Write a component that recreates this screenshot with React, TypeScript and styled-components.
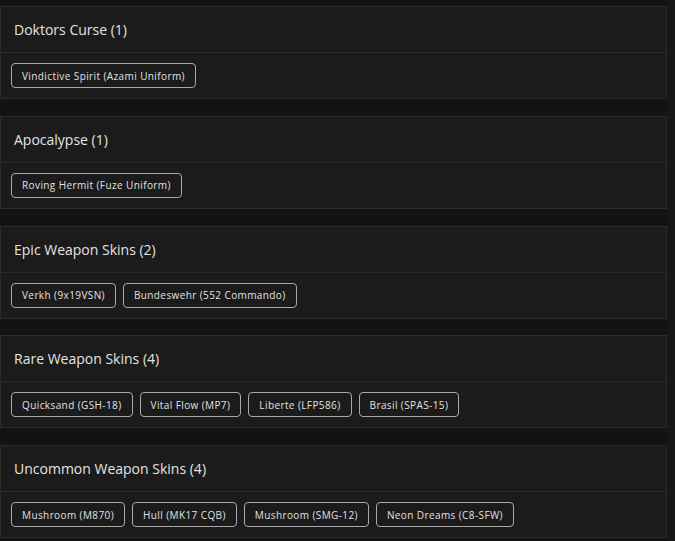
import React from "react";
import styled, { createGlobalStyle } from "styled-components";

const GlobalStyle = createGlobalStyle`
    html, body {
        margin: 0;
        padding: 0;
        background: #131313;
        font-family: "Open Sans", "Liberation Sans", sans-serif;
    }
`;

const PageSC = styled.div`
    display: flex;
    min-height: 541px;
`;

const ListSC = styled.div`
    flex: 1;
    display: flex;
    flex-direction: column;
    gap: 16.75px;
    padding-top: 6px;
    padding-bottom: 17px;
`;

const ScrollTrackSC = styled.div`
    width: 8px;
    background: #171717;
`;

const CardSC = styled.section`
    background: #1b1b1b;
    border: 1px solid #2b2b2b;
`;

const HeaderSC = styled.div`
    height: 45px;
    display: flex;
    align-items: center;
    padding: 0 13px;
    border-bottom: 1px solid #2b2b2b;
    color: #e4e4e4;
    font-size: 14px;
    letter-spacing: 0;
`;

const BodySC = styled.div`
    height: 45px;
    box-sizing: border-box;
    display: flex;
    align-items: center;
    gap: 7px;
    padding: 0 10px;
`;

const ChipSC = styled.span`
    height: 25px;
    box-sizing: border-box;
    display: inline-flex;
    align-items: center;
    padding: 0 10px;
    border: 1px solid #a9a9a9;
    border-radius: 4px;
    color: #e2e2e2;
    font-size: 10px;
    letter-spacing: 0.4px;
    white-space: nowrap;
`;

type Group = { title: string; items: string[] };

const groups: Group[] = [
    { title: "Doktors Curse", items: ["Vindictive Spirit (Azami Uniform)"] },
    { title: "Apocalypse", items: ["Roving Hermit (Fuze Uniform)"] },
    { title: "Epic Weapon Skins", items: ["Verkh (9x19VSN)", "Bundeswehr (552 Commando)"] },
    {
        title: "Rare Weapon Skins",
        items: ["Quicksand (GSH-18)", "Vital Flow (MP7)", "Liberte (LFP586)", "Brasil (SPAS-15)"],
    },
    {
        title: "Uncommon Weapon Skins",
        items: ["Mushroom (M870)", "Hull (MK17 CQB)", "Mushroom (SMG-12)", "Neon Dreams (C8-SFW)"],
    },
];

export default function App() {
    return (
        <>
            <GlobalStyle />
            <PageSC>
                <ListSC>
                    {groups.map((g) => (
                        <CardSC key={g.title}>
                            <HeaderSC>
                                {g.title} ({g.items.length})
                            </HeaderSC>
                            <BodySC>
                                {g.items.map((it) => (
                                    <ChipSC key={it}>{it}</ChipSC>
                                ))}
                            </BodySC>
                        </CardSC>
                    ))}
                </ListSC>
                <ScrollTrackSC />
            </PageSC>
        </>
    );
}
